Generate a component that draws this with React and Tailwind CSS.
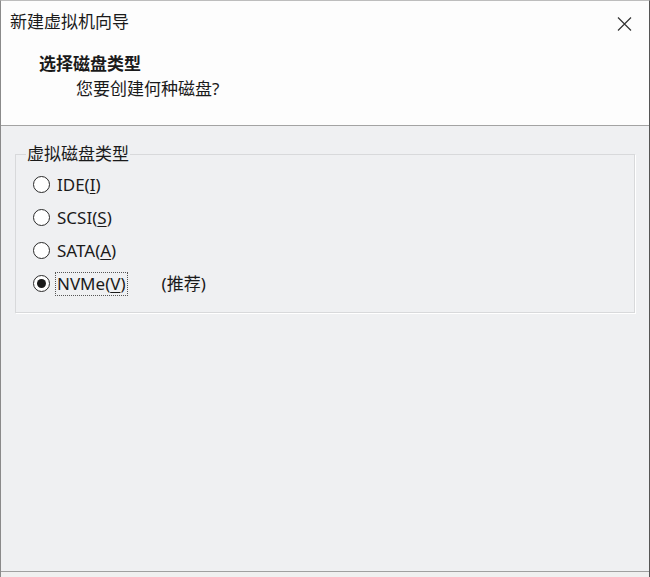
import React, { useState } from 'react';

const options = [
  { id: 'ide', label: 'IDE(', key: 'I' },
  { id: 'scsi', label: 'SCSI(', key: 'S' },
  { id: 'sata', label: 'SATA(', key: 'A' },
  { id: 'nvme', label: 'NVMe(', key: 'V', note: '(推荐)' },
];

const font = { fontFamily: '"Noto Sans", "Noto Sans CJK SC", sans-serif' };

function Radio({ checked }) {
  return (
    <span className="w-[17px] h-[17px] rounded-full border border-[#2a2a2a] bg-white flex items-center justify-center shrink-0">
      {checked && <span className="w-[9px] h-[9px] rounded-full bg-[#1a1a1a]" />}
    </span>
  );
}

export default function App() {
  const [selected, setSelected] = useState('nvme');

  return (
    <div
      className="w-[650px] h-[577px] flex flex-col border-l border-r border-t border-l-[#8a8a8a] border-r-[#555] border-t-[#bdbdbd] text-[#1a1a1a] overflow-hidden"
      style={font}
    >
      {/* header */}
      <div className="h-[125px] bg-[#fdfdfd] border-b border-[#a3a3a3] shrink-0 relative">
        <div className="pl-[9px] pt-[9px] text-[17px] leading-[24px]">新建虚拟机向导</div>
        <button className="absolute right-[17px] top-[15px] w-[16px] h-[15px] flex items-center justify-center">
          <svg width="15" height="14" viewBox="0 0 15 14">
            <path d="M1 0.5 L14 13.5 M14 0.5 L1 13.5" stroke="#333" strokeWidth="1.2" fill="none" />
          </svg>
        </button>
        <div className="pl-[38px] pt-[18px] text-[17px] leading-[24px] font-bold">选择磁盘类型</div>
        <div className="pl-[75px] pt-[1px] text-[17px] leading-[24px]">您要创建何种磁盘?</div>
      </div>

      {/* body */}
      <div className="flex-1 bg-[#eff0f2] px-[14px] pt-[16px] border-b border-[#a0a0a0]">
        <fieldset className="border border-[#d8d9db] shadow-[1px_1px_0_#ffffff]">
          <legend className="ml-[10px] px-[1px] text-[17px] leading-[24px]">虚拟磁盘类型</legend>
          <div className="pl-[17px] pr-[8px] pt-[2px] pb-[12px]">
            {options.map((o) => (
              <div
                key={o.id}
                className="h-[33px] flex items-center cursor-default"
                onClick={() => setSelected(o.id)}
              >
                <Radio checked={selected === o.id} />
                <span
                  className={`ml-[5px] text-[17px] leading-[22px] px-[1px] border border-dotted ${
                    selected === o.id ? 'border-[#555]' : 'border-transparent'
                  }`}
                >
                  {o.label}
                  <span className="underline underline-offset-2">{o.key}</span>)
                </span>
                {o.note && <span className="ml-[34px] text-[17px] leading-[22px]">{o.note}</span>}
              </div>
            ))}
          </div>
        </fieldset>
      </div>

      <div className="h-[5px] bg-[#f0f0f0] shrink-0" />
    </div>
  );
}
